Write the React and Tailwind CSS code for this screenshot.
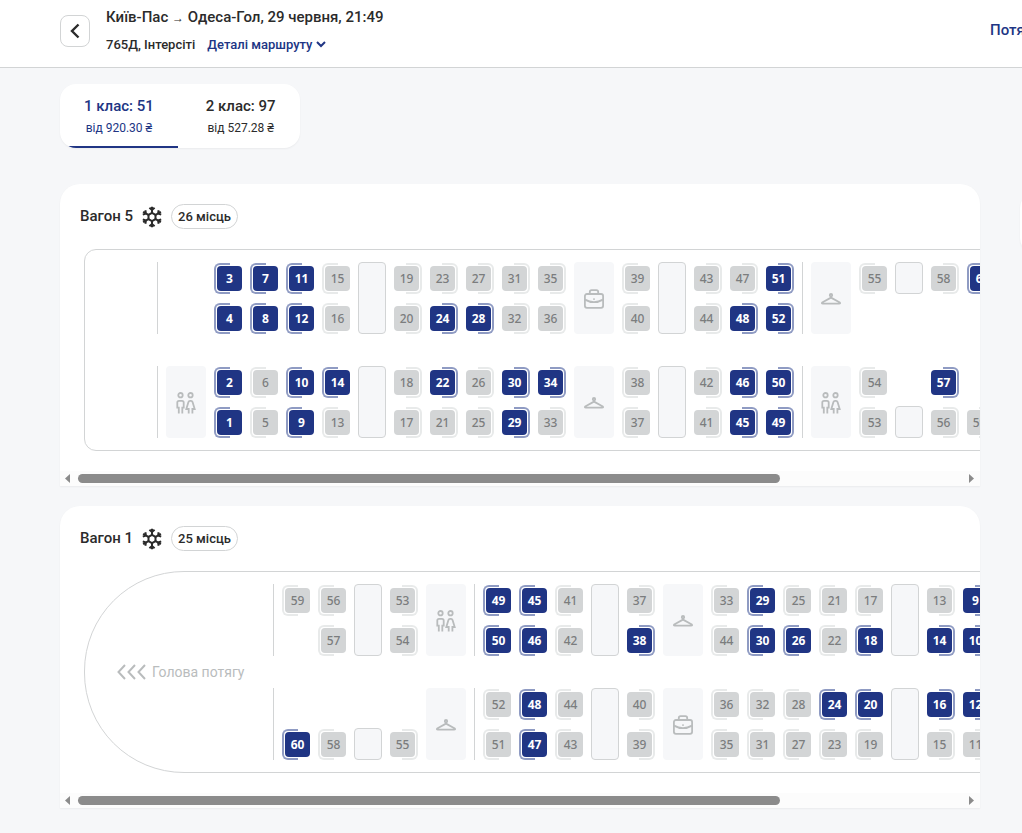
import { useRef, useState } from "react";

const cars = [
  {
    id: 5,
    places: 26,
    free: [1, 2, 3, 4, 7, 8, 9, 10, 11, 12, 14, 22, 24, 28, 29, 30, 34, 45, 46, 48, 49, 50, 51, 52, 57, 60],
    columns: [
      { type: "wall" },
      { type: "zone", icons: [null, "wc"] },
      { type: "seats", side: "left", seats: [3, 4, 2, 1] },
      { type: "seats", side: "left", seats: [7, 8, 6, 5] },
      { type: "seats", side: "left", seats: [11, 12, 10, 9] },
      { type: "seats", side: "left", seats: [15, 16, 14, 13] },
      { type: "table", sizes: ["full", "full"] },
      { type: "seats", side: "right", seats: [19, 20, 18, 17] },
      { type: "seats", side: "right", seats: [23, 24, 22, 21] },
      { type: "seats", side: "right", seats: [27, 28, 26, 25] },
      { type: "seats", side: "right", seats: [31, 32, 30, 29] },
      { type: "seats", side: "right", seats: [35, 36, 34, 33] },
      { type: "zone", icons: ["bag", "hanger"] },
      { type: "seats", side: "left", seats: [39, 40, 38, 37] },
      { type: "table", sizes: ["full", "full"] },
      { type: "seats", side: "right", seats: [43, 44, 42, 41] },
      { type: "seats", side: "right", seats: [47, 48, 46, 45] },
      { type: "seats", side: "right", seats: [51, 52, 50, 49] },
      { type: "wall" },
      { type: "zone", icons: ["hanger", "wc"] },
      { type: "seats", side: "left", seats: [55, null, 54, 53] },
      { type: "table", sizes: ["top", "bottom"] },
      { type: "seats", side: "right", seats: [58, null, 57, 56] },
      { type: "seats", side: "right", turned: [60], seats: [60, null, null, 59] },
    ],
  },
  {
    id: 1,
    places: 25,
    head: true,
    free: [9, 10, 12, 14, 16, 18, 20, 24, 26, 29, 30, 38, 45, 46, 47, 48, 49, 50, 60],
    columns: [
      { type: "wall" },
      { type: "seats", side: "left", seats: [59, null, null, 60] },
      { type: "seats", side: "left", seats: [56, 57, null, 58] },
      { type: "table", sizes: ["full", "bottom"] },
      { type: "seats", side: "right", seats: [53, 54, null, 55] },
      { type: "zone", icons: ["wc", "hanger"] },
      { type: "wall" },
      { type: "seats", side: "left", seats: [49, 50, 52, 51] },
      { type: "seats", side: "left", seats: [45, 46, 48, 47] },
      { type: "seats", side: "left", seats: [41, 42, 44, 43] },
      { type: "table", sizes: ["full", "full"] },
      { type: "seats", side: "right", seats: [37, 38, 40, 39] },
      { type: "zone", icons: ["hanger", "bag"] },
      { type: "seats", side: "left", seats: [33, 44, 36, 35] },
      { type: "seats", side: "left", seats: [29, 30, 32, 31] },
      { type: "seats", side: "left", seats: [25, 26, 28, 27] },
      { type: "seats", side: "left", seats: [21, 22, 24, 23] },
      { type: "seats", side: "left", seats: [17, 18, 20, 19] },
      { type: "table", sizes: ["full", "full"] },
      { type: "seats", side: "right", seats: [13, 14, 16, 15] },
      { type: "seats", side: "right", seats: [9, 10, 12, 11] },
    ],
  },
];

function Snowflake() {
  return (
    <svg width="22" height="24" viewBox="-12 -12 24 24" fill="none" stroke="#2b2b2b" strokeWidth="2.2">
      {[0, 60, 120, 180, 240, 300].map((deg) => (
        <g key={deg} transform={`rotate(${deg})`}>
          <path d="M0 -4V-11.2M-2.8 -10L0 -7.6L2.8 -10" />
          <path d="M0 -4.4L3.8 -2.2" />
        </g>
      ))}
    </svg>
  );
}

const zoneIcons = {
  wc: (
    <svg width="20" height="22" viewBox="0 0 20 22" fill="none" stroke="#b9bcbd" strokeWidth="1.8">
      <circle cx="4.5" cy="3.2" r="2.2" />
      <circle cx="14.5" cy="3.2" r="2.2" />
      <path d="M2.8 21.5V15.6H1.3V10.6Q1.3 8.9 3 8.9H6Q7.7 8.9 7.7 10.6V15.6H6.3V21.5" />
      <path d="M12.7 21.5V17H10.3L12.3 10.4Q12.8 8.9 14 8.9H15Q16.2 8.9 16.7 10.4L18.7 17H16.4V21.5" />
    </svg>
  ),
  bag: (
    <svg width="20" height="20" viewBox="0 0 20 20" fill="none" stroke="#b9bcbd" strokeWidth="1.8">
      <rect x="0.9" y="5" width="18.2" height="13.8" rx="2" />
      <path d="M5.8 5V3Q5.8 1.2 7.6 1.2H12.4Q14.2 1.2 14.2 3V5M1 10.6Q10 15.8 19 10.6" />
      <path d="M9.3 10.2H10.7" />
    </svg>
  ),
  hanger: (
    <svg width="20" height="12" viewBox="0 0 20 12" fill="none" stroke="#b9bcbd" strokeWidth="1.8">
      <circle cx="10" cy="2.2" r="1.2" />
      <path d="M10 4.6L1.6 9.2Q0 10.7 2 10.7H18Q20 10.7 18.4 9.2Z" strokeLinejoin="round" />
    </svg>
  ),
};

function Seat({ number, free, side }) {
  if (!number) return <div className="h-8 w-7" />;
  return (
    <button
      disabled={!free}
      className={`relative flex h-8 w-7 items-center pt-px font-['Noto_Sans',sans-serif] text-xs ${
        side === "left" ? "justify-end" : "justify-start"
      } ${free ? "font-bold text-white" : "font-medium text-[#7b7d7e]"}`}
    >
      <span
        className={`absolute top-px bottom-0 w-4 border-2 ${free ? "border-[#8f9bc3]" : "border-[#e8eaea]"} ${
          side === "left" ? "left-0 rounded-l-md border-r-0" : "right-0 rounded-r-md border-l-0"
        }`}
      />
      <span
        className={`relative flex size-[25px] items-center justify-center rounded-[4px] ${
          free ? "bg-[#203584]" : "bg-[#d3d5d6]"
        }`}
      >
        {number}
      </span>
    </button>
  );
}

function Half({ column, index, free }) {
  if (column.type === "wall") return <div className="h-[72px] w-px bg-[#d2d4d5]" />;

  if (column.type === "zone") {
    const icon = column.icons[index];
    return (
      <div className={`flex h-[72px] w-10 items-center justify-center rounded-sm pt-px ${icon ? "bg-[#f6f7f9]" : ""}`}>
        {zoneIcons[icon]}
      </div>
    );
  }

  if (column.type === "table") {
    const size = column.sizes[index];
    return (
      <div className={`flex h-[72px] w-7 flex-col ${size === "bottom" ? "justify-end" : "justify-start"}`}>
        <div className={`rounded-sm border border-[#d2d4d5] bg-[#f6f7f9] ${size === "full" ? "h-full" : "h-8"}`} />
      </div>
    );
  }

  return (
    <div className="flex flex-col gap-2">
      {column.seats.slice(index * 2, index * 2 + 2).map((n, i) => (
        <Seat
          key={i}
          number={n}
          free={free.includes(n)}
          side={column.turned?.includes(n) ? "left" : column.side}
        />
      ))}
    </div>
  );
}

function Car({ car }) {
  const scroller = useRef(null);
  const [offset, setOffset] = useState(0);

  const handleScroll = (e) => {
    const el = e.currentTarget;
    setOffset((el.scrollLeft / el.scrollWidth) * 100);
  };

  const scrollBy = (dx) => scroller.current.scrollBy({ left: dx, behavior: "smooth" });

  return (
    <section className="overflow-hidden rounded-t-[20px] bg-white pt-5 shadow-xs">
      <div className="flex h-[25px] items-center px-5">
        <h2 className="text-[15px] font-medium">Вагон {car.id}</h2>
        <span className="ml-2">
          <Snowflake />
        </span>
        <span className="ml-2 flex h-[25px] items-center rounded-full border border-[#d2d4d5] px-1.5 text-[13px] font-medium">
          {car.places} місць
        </span>
      </div>

      <div ref={scroller} onScroll={handleScroll} className="mt-5 overflow-x-auto px-6 pb-5 [scrollbar-width:none]">
        <div
          className={`flex w-[1120px] border border-[#d2d4d5] py-3 ${
            car.head ? "rounded-l-[100px]" : "rounded-l-xl"
          }`}
        >
          {car.head ? (
            <div className="flex w-[188px] shrink-0 items-center gap-1.5 pl-8 text-sm text-[#b9bcbd]">
              <svg width="29" height="16" viewBox="0 0 29 16" fill="none" stroke="currentColor" strokeWidth="2">
                <path d="M8 1L1.5 8L8 15M18 1L11.5 8L18 15M28 1L21.5 8L28 15" />
              </svg>
              <span className="whitespace-nowrap">Голова потягу</span>
            </div>
          ) : (
            <div className="w-[72px] shrink-0" />
          )}
          <div className="flex gap-2">
            {car.columns.map((column, i) => (
              <div key={i} className="flex flex-col gap-8">
                <Half column={column} index={0} free={car.free} />
                <Half column={column} index={1} free={car.free} />
              </div>
            ))}
          </div>
        </div>
      </div>

      <div className="flex h-[15px] items-center bg-[#fcfcfc] text-[#8b8b8b]">
        <button aria-label="Ліворуч" onClick={() => scrollBy(-200)} className="flex w-[18px] justify-center pr-1">
          <svg width="5" height="9" viewBox="0 0 5 9" fill="currentColor">
            <path d="M5 0V9L0 4.5Z" />
          </svg>
        </button>
        <div className="flex-1">
          <div className="h-[9px] w-[79.4%] rounded-full bg-[#8b8b8b]" style={{ marginLeft: `${offset}%` }} />
        </div>
        <button aria-label="Праворуч" onClick={() => scrollBy(200)} className="flex w-[18px] justify-center">
          <svg width="5" height="9" viewBox="0 0 5 9" fill="currentColor">
            <path d="M0 0V9L5 4.5Z" />
          </svg>
        </button>
      </div>
    </section>
  );
}

const classes = [
  { id: 1, title: "1 клас: 51", price: "від 920.30 ₴" },
  { id: 2, title: "2 клас: 97", price: "від 527.28 ₴" },
];

export default function App() {
  const [active, setActive] = useState(1);

  return (
    <div className="min-h-screen overflow-hidden bg-[#f6f7f9] font-['Roboto','Noto_Sans',sans-serif] text-[#2b2b2b]">
      <header className="flex h-[68px] items-center border-b border-[#d2d4d5] bg-white pb-1.5 pl-[60px]">
        <button
          aria-label="Назад"
          className="flex h-8 w-[30px] shrink-0 items-center justify-center rounded-lg border border-[#d2d4d5]"
        >
          <svg width="10" height="16" viewBox="0 0 10 16" fill="none" stroke="currentColor" strokeWidth="2.4">
            <path d="M8.5 1.5L2 8L8.5 14.5" />
          </svg>
        </button>
        <div className="ml-4">
          <h1 className="text-[15px] leading-5 font-medium">
            Київ-Пас <span className="text-xs">→</span> Одеса-Гол, 29 червня, 21:49
          </h1>
          <div className="mt-2 flex items-center gap-3 text-[13px] leading-5 font-medium">
            <span>765Д, Інтерсіті</span>
            <button className="flex items-center gap-1 text-[#203584]">
              Деталі маршруту
              <svg width="10" height="7" viewBox="0 0 10 7" fill="none" stroke="currentColor" strokeWidth="2">
                <path d="M1 1L5 5L9 1" />
              </svg>
            </button>
          </div>
        </div>
        <a href="#trains" className="ml-auto w-8 shrink-0 text-[15px] font-medium whitespace-nowrap text-[#203584]">
          Потяг
        </a>
      </header>

      <main className="pt-4 pb-6 pl-[60px]">
        <div className="inline-flex gap-1 overflow-hidden rounded-2xl bg-white align-top shadow-xs">
          {classes.map((c) => (
            <button
              key={c.id}
              onClick={() => setActive(c.id)}
              className={`flex h-16 flex-col items-center border-b-2 px-6 pt-3 ${
                active === c.id ? "border-[#203584] text-[#203584]" : "border-transparent"
              }`}
            >
              <span className="text-[15px] leading-5 font-medium">{c.title}</span>
              <span className="mt-0.5 text-xs leading-5">{c.price}</span>
            </button>
          ))}
        </div>

        <div className="mt-9 flex items-start gap-10">
          <div className="flex min-w-0 flex-1 flex-col gap-5">
            {cars.map((car) => (
              <Car key={car.id} car={car} />
            ))}
          </div>
          {/* панель замовлення */}
          <aside className="mt-2 -mr-[318px] h-[62px] w-80 shrink-0 rounded-2xl bg-white shadow-xs" />
        </div>
      </main>
    </div>
  );
}
